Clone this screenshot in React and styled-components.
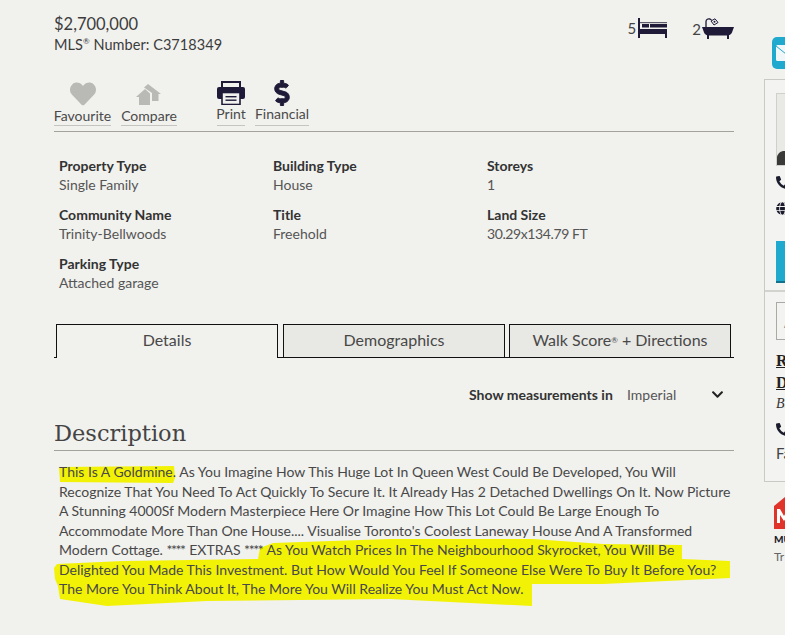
import styled, { createGlobalStyle } from "styled-components";
import { FaHeart, FaDollarSign, FaChevronDown, FaPhoneAlt, FaGlobe } from "react-icons/fa";

const GlobalStyle = createGlobalStyle`
  html, body { margin: 0; padding: 0; background: #f1f1ee; }
  body { font-family: "Lato", "Liberation Sans", sans-serif; color: #3c3c3c; }
`;

const Page = styled.div`
  width: 785px;
  height: 635px;
  overflow: hidden;
  display: flex;
  background: #f1f1ee;
`;

const Main = styled.main`
  width: 680px;
  flex: none;
  margin-left: 54px;
`;

/* ---------- top ---------- */
const Summary = styled.div`
  display: flex;
  justify-content: space-between;
  padding-top: 14px;
  height: 60px;
`;
const Price = styled.div`
  font-size: 16.5px;
  line-height: 20px;
`;
const Mls = styled.div`
  font-size: 14.5px;
  line-height: 20px;
  margin-top: 1px;
  letter-spacing: 0.05px;
`;
const Sup = styled.sup`
  font-size: 8px;
  line-height: 0;
`;
const Rooms = styled.div`
  display: flex;
  gap: 25px;
  padding-top: 4px;
  align-items: flex-start;
`;
const Room = styled.div`
  display: flex;
  align-items: center;
  gap: ${(p) => p.$gap}px;
  font-size: 15px;
  color: #444;
`;

const Actions = styled.div`
  display: flex;
  align-items: flex-start;
  height: 57px;
  border-bottom: 1px solid #a3a39b;
`;
const Action = styled.div`
  display: flex;
  flex-direction: column;
  align-items: center;
  height: 52px;
  box-sizing: border-box;
  padding-top: 7px;
  margin-left: ${(p) => p.$gap}px;
  width: ${(p) => p.$w}px;
  border-bottom: 1px solid #c4c4c0;
  font-size: 14px;
  color: #4a4a4a;
`;
const ActionIcon = styled.div`
  height: ${(p) => (p.$dark ? 24 : 26)}px;
  display: flex;
  align-items: center;
  justify-content: center;
  color: ${(p) => (p.$dark ? "#1e1a38" : "#b9b9b5")};
`;
const ActionLabel = styled.div`
  line-height: 18px;
  white-space: nowrap;
`;

/* ---------- facts ---------- */
const Facts = styled.div`
  display: grid;
  grid-template-columns: 214px 214px 214px;
  grid-auto-rows: 49px;
  padding: 24px 0 0 5px;
  height: 167px;
  box-sizing: border-box;
`;
const Fact = styled.div`
  font-size: 14px;
  line-height: 19px;
`;
const FactLabel = styled.div`
  font-weight: 700;
  color: #333;
`;
const FactValue = styled.div`
  color: #555;
  letter-spacing: ${(p) => (p.$digits ? "-0.4px" : "0")};
`;

/* ---------- tabs ---------- */
const Tabs = styled.div`
  display: flex;
  align-items: flex-start;
  padding-left: 2px;
  margin-top: 25px;
  height: 34px;
  box-shadow: inset 0 -1px 0 #111;
`;
const Tab = styled.div`
  width: 222px;
  height: 34px;
  box-sizing: border-box;
  margin-right: ${(p) => p.$mr}px;
  padding-bottom: ${(p) => (p.$active ? 5 : 3)}px;
  border: 1px solid #111;
  border-bottom: ${(p) => (p.$active ? "none" : "1px solid #111")};
  background: ${(p) => (p.$active ? "#f1f1ee" : "#e8e8e4")};
  display: flex;
  align-items: center;
  justify-content: center;
  font-size: 16px;
  color: #484848;
`;

const Measure = styled.div`
  display: flex;
  align-items: center;
  height: 20px;
  margin-top: 26px;
  padding-left: 415px;
  font-size: 14px;
`;
const MeasureLabel = styled.span`
  font-weight: 700;
  color: #333;
  width: 158px;
  flex: none;
`;
const MeasureValue = styled.span`
  color: #555;
  width: 84px;
  flex: none;
`;

const Heading = styled.h2`
  margin: 15px 0 0;
  height: 32px;
  box-sizing: border-box;
  border-bottom: 1px solid #a3a39b;
  font-family: "DejaVu Serif", serif;
  font-weight: 400;
  font-size: 22.5px;
  line-height: 28px;
  color: #444;
`;

const DescriptionBody = styled.div`
  position: relative;
  margin-top: 11px;
  padding-left: 5px;
`;
const Marker = styled.svg`
  position: absolute;
  left: 0;
  top: 1px;
  width: 680px;
  height: 145px;
  color: #f2f207;
`;
const Text = styled.p`
  position: relative;
  margin: 0;
  font-size: 14px;
  line-height: 19.5px;
  color: #484848;
  white-space: nowrap;
`;
const Stars = styled.span`
  letter-spacing: -1.4px;
  margin-right: 1px;
`;

/* ---------- side column ---------- */
const Side = styled.aside`
  width: 300px;
  flex: none;
  margin-left: 30px;
`;
const MailButton = styled.div`
  width: 40px;
  height: 32px;
  margin: 37px 0 0 8px;
  border-radius: 5px;
  background: #1fa9cf;
  display: flex;
  align-items: center;
  padding-left: 4px;
  box-sizing: border-box;
`;
const AgentCard = styled.div`
  margin-top: 10px;
  height: 403px;
  box-sizing: border-box;
  border: 1px solid #c9c9c6;
  background: #f3f3f1;
`;
const Agent = styled.div`
  height: 212px;
  box-sizing: border-box;
  padding: 13px 0 0 11px;
  border-bottom: 2px solid #d2d2cf;
`;
const Photo = styled.div`
  width: 120px;
  height: 73px;
  box-sizing: border-box;
  border: 1px solid #cfcfcc;
  background: #e9e9e6;
  display: flex;
  align-items: flex-end;
`;
const ContactIcon = styled.div`
  display: flex;
  height: 14px;
  margin-top: ${(p) => p.$mt}px;
  color: #1b1b2e;
`;
const BlueButton = styled.div`
  margin-top: 25px;
  width: 120px;
  height: 42px;
  box-sizing: border-box;
  background: #1fa9cf;
  border-bottom: 2px solid #12728c;
`;
const Agent2 = styled.div`
  padding: 10px 0 0 11px;
`;
const SmallBox = styled.div`
  width: 120px;
  height: 38px;
  box-sizing: border-box;
  border: 1px solid #a9a9a6;
  font-size: 9px;
  color: #777;
  padding: 16px 0 0 7px;
`;
const BrokerName = styled.div`
  font-family: "Liberation Serif", serif;
  font-weight: 700;
  font-size: 16px;
  line-height: 22px;
  color: #222;
  text-decoration: underline;
  margin-top: ${(p) => p.$mt}px;
`;
const Italic = styled.div`
  font-family: "Liberation Serif", serif;
  font-style: italic;
  font-size: 14px;
  line-height: 20px;
  color: #333;
`;
const Fax = styled.div`
  font-size: 15px;
  margin-top: 7px;
  color: #444;
`;
const LogoBlock = styled.div`
  padding: 15px 0 0 10px;
`;
const LogoCaption = styled.div`
  font-size: 10px;
  font-weight: 900;
  color: #1b1b2e;
  line-height: 12px;
  margin-top: 1px;
`;
const LogoText = styled.div`
  font-size: 12px;
  color: #666;
  line-height: 16px;
  margin-top: 4px;
`;

/* ---------- drawings ---------- */
const CompareIcon = () => (
  <svg width="26" height="21" viewBox="0 0 26 21" fill="currentColor">
    <path d="M0 13 L9 5 L14 9.5 L14 21 L3 21 L3 13 Z" />
    <path d="M8 3.5 L12 0 L25 10 L22.5 10 L22.5 17 L16 17 L16 9 Z" />
  </svg>
);

const PrintIcon = () => (
  <svg width="28" height="24" viewBox="0 0 28 24">
    <path d="M5 7 V1 H23 V7" fill="none" stroke="#1e1a38" strokeWidth="2" />
    <rect x="0" y="6" width="28" height="12" rx="2" fill="#1e1a38" />
    <rect x="5" y="11.5" width="18" height="12" fill="#f1f1ee" stroke="#1e1a38" strokeWidth="1.6" />
    <rect x="8.5" y="15" width="11" height="1.4" fill="#1e1a38" />
    <rect x="8.5" y="18.5" width="11" height="1.4" fill="#1e1a38" />
  </svg>
);

const BedIcon = () => (
  <svg width="29" height="20" viewBox="0 0 29 20" fill="#1e1a38">
    <rect x="0" y="0" width="2" height="20" />
    <rect x="2" y="11" width="27" height="5" />
    <rect x="4" y="6" width="7" height="3.5" />
    <rect x="12" y="6" width="17" height="3.5" />
    <rect x="2" y="4" width="27" height="1.2" opacity="0.7" />
    <rect x="27" y="16" width="2" height="4" />
  </svg>
);

const BathIcon = () => (
  <svg width="32" height="22" viewBox="0 0 32 22" fill="#1e1a38">
    <path d="M0 9 H32 L30.5 13 C29.5 16.5 27.5 17.5 25 17.5 H7 C4.5 17.5 2.5 16.5 1.5 13 Z" />
    <rect x="5" y="17" width="2" height="4" />
    <rect x="25" y="17" width="2" height="4" />
    <path d="M4 9 V3.5 C4 1.5 6 0.5 8 1 L9.5 2" fill="none" stroke="#1e1a38" strokeWidth="1.3" />
    <path d="M9 3 L13 0.8 L16 4.5 L12 7 Z" fill="none" stroke="#1e1a38" strokeWidth="1" />
    <circle cx="12.5" cy="3.8" r="1" />
  </svg>
);

const EnvelopeIcon = () => (
  <svg width="20" height="16" viewBox="0 0 20 16">
    <rect width="20" height="16" rx="1.5" fill="#f1f7f8" />
    <path d="M0 1 L10 9 L20 1" fill="none" stroke="#1fa9cf" strokeWidth="1" />
  </svg>
);

const PhotoFigure = () => (
  <svg width="10" height="14" viewBox="0 0 10 14">
    <path d="M0 14 V6 C1 2 4 0 7 0 H10 V14 Z" fill="#3a3a38" />
  </svg>
);

const BrokerLogo = () => (
  <svg width="20" height="32" viewBox="0 0 20 32">
    <path d="M0 9 L11 0 L20 6 V32 H0 Z" fill="#e0332a" />
    <path d="M3 26 V12 H6 L10 19 L14 12 H17 V26 H14 V18 L10 24 L6 18 V26 Z" fill="#fff" />
  </svg>
);

/* ---------- content ---------- */
const facts = [
  ["Property Type", "Single Family"],
  ["Building Type", "House"],
  ["Storeys", "1"],
  ["Community Name", "Trinity-Bellwoods"],
  ["Title", "Freehold"],
  ["Land Size", "30.29x134.79 FT", true],
  ["Parking Type", "Attached garage"],
];

export default function App() {
  return (
    <>
      <GlobalStyle />
      <Page>
        <Main>
          <Summary>
            <div>
              <Price>$2,700,000</Price>
              <Mls>MLS<Sup>®</Sup> Number: C3718349</Mls>
            </div>
            <Rooms>
              <Room $gap={2}>5<BedIcon /></Room>
              <Room $gap={1}>2<BathIcon /></Room>
            </Rooms>
          </Summary>

          <Actions>
            <Action $w={57} $gap={0}>
              <ActionIcon><FaHeart size={26} /></ActionIcon>
              <ActionLabel>Favourite</ActionLabel>
            </Action>
            <Action $w={56} $gap={10}>
              <ActionIcon><CompareIcon /></ActionIcon>
              <ActionLabel>Compare</ActionLabel>
            </Action>
            <Action $w={28} $gap={40}>
              <ActionIcon $dark><PrintIcon /></ActionIcon>
              <ActionLabel>Print</ActionLabel>
            </Action>
            <Action $w={54} $gap={10}>
              <ActionIcon $dark><FaDollarSign size={26} stroke="#1e1a38" strokeWidth={18} /></ActionIcon>
              <ActionLabel>Financial</ActionLabel>
            </Action>
          </Actions>

          <Facts>
            {facts.map(([label, value, digits]) => (
              <Fact key={label}>
                <FactLabel>{label}</FactLabel>
                <FactValue $digits={digits}>{value}</FactValue>
              </Fact>
            ))}
          </Facts>

          <Tabs>
            <Tab $active $mr={5}>Details</Tab>
            <Tab $mr={4}>Demographics</Tab>
            <Tab $mr={0}>Walk Score<Sup>®</Sup>&nbsp;+ Directions</Tab>
          </Tabs>

          <Measure>
            <MeasureLabel>Show measurements in</MeasureLabel>
            <MeasureValue>Imperial</MeasureValue>
            <FaChevronDown size={13} color="#222" />
          </Measure>

          <Heading>Description</Heading>

          <DescriptionBody>
            <Marker viewBox="0 0 680 145">
              <path fill="currentColor" d="M5 4 L120 3 L121 15 L119 20 L6 19 Z" />
              <path fill="currentColor" d="M206 85 L219 80 L336 76 L479 76 L549 81 L628 82 L628 96 L676 98 L676 115 L549 121 L478 121 L478 143 L336 136 L153 138 L53 143 L6 136 L4 123 L1 116 L0 105 L3 101 L69 98 L204 96 Z" />
            </Marker>
            <Text>
              This Is A Goldmine. As You Imagine How This Huge Lot In Queen West Could Be Developed, You Will<br />
              Recognize That You Need To Act Quickly To Secure It. It Already Has 2 Detached Dwellings On It. Now Picture<br />
              A Stunning 4000Sf Modern Masterpiece Here Or Imagine How This Lot Could Be Large Enough To<br />
              Accommodate More Than One House.... Visualise Toronto's Coolest Laneway House And A Transformed<br />
              Modern Cottage. <Stars>****</Stars> EXTRAS <Stars>****</Stars> As You Watch Prices In The Neighbourhood Skyrocket, You Will Be<br />
              Delighted You Made This Investment. But How Would You Feel If Someone Else Were To Buy It Before You?<br />
              The More You Think About It, The More You Will Realize You Must Act Now.
            </Text>
          </DescriptionBody>
        </Main>

        <Side>
          <MailButton><EnvelopeIcon /></MailButton>
          <AgentCard>
            <Agent>
              <Photo><PhotoFigure /></Photo>
              <ContactIcon $mt={10}><FaPhoneAlt size={13} /></ContactIcon>
              <ContactIcon $mt={12}><FaGlobe size={13} /></ContactIcon>
              <BlueButton />
            </Agent>
            <Agent2>
              <SmallBox>A</SmallBox>
              <BrokerName $mt={10}>R</BrokerName>
              <BrokerName $mt={0}>D</BrokerName>
              <Italic>B.</Italic>
              <ContactIcon $mt={9}><FaPhoneAlt size={13} /></ContactIcon>
              <Fax>Fa</Fax>
            </Agent2>
          </AgentCard>
          <LogoBlock>
            <BrokerLogo />
            <LogoCaption>MU</LogoCaption>
            <LogoText>Tr</LogoText>
          </LogoBlock>
        </Side>
      </Page>
    </>
  );
}
